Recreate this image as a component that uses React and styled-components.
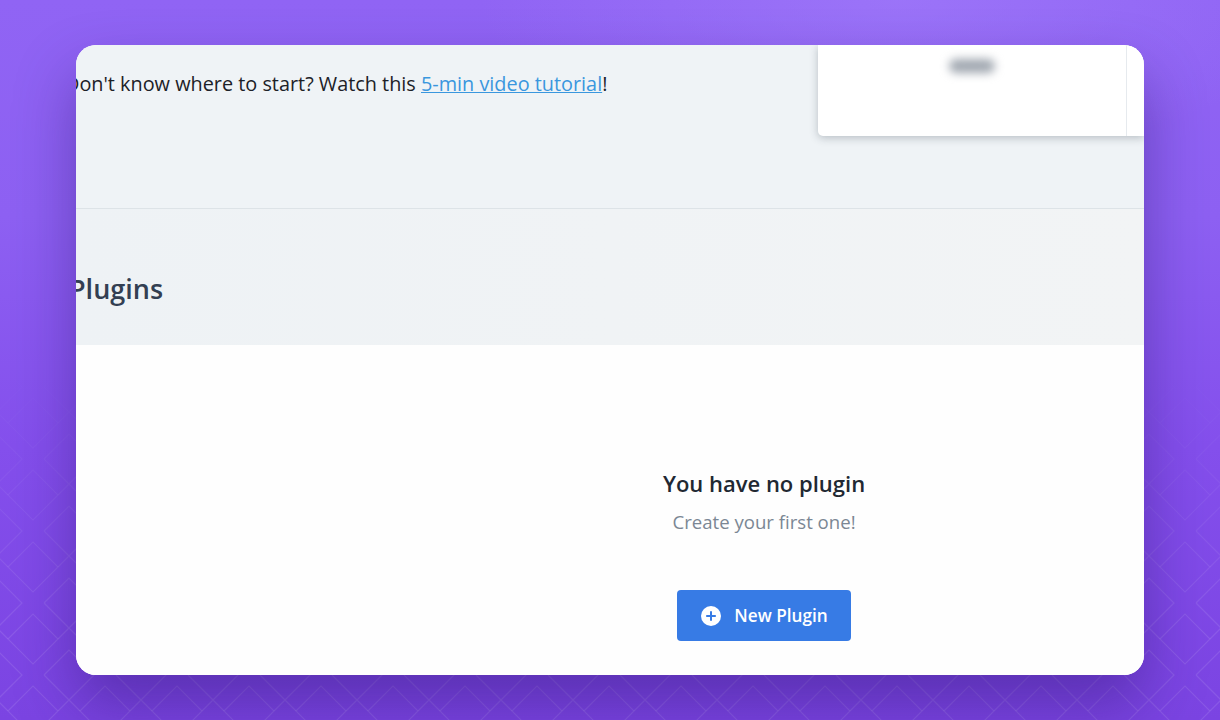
import React from "react";
import styled, { createGlobalStyle } from "styled-components";

const GlobalStyle = createGlobalStyle`
  html, body {
    margin: 0;
    height: 100%;
    overflow: hidden;
    font-family: "Open Sans", "Noto Sans", sans-serif;
  }
`;

const Stage = styled.div`
  position: relative;
  width: 1220px;
  height: 720px;
  box-sizing: border-box;
  padding: 45px 76px;
  overflow: hidden;
  background:
    radial-gradient(ellipse 420px 160px at 900px 0, rgba(164, 128, 252, 0.55), rgba(164, 128, 252, 0)),
    linear-gradient(180deg, #9064f4 0%, #8d60f2 30%, #844fec 62%, #7b44e2 100%);
`;

const Pattern = styled.svg`
  position: absolute;
  inset: 0;
  width: 100%;
  height: 100%;
`;

const Card = styled.div`
  position: relative;
  display: flex;
  flex-direction: column;
  height: 630px;
  border-radius: 20px;
  overflow: hidden;
  background: #fff;
  box-shadow: 0 30px 60px rgba(44, 20, 110, 0.42);
`;

const TopBar = styled.div`
  display: flex;
  justify-content: space-between;
  align-items: flex-start;
  flex: 0 0 164px;
  box-sizing: border-box;
  background: #eff3f6;
  border-bottom: 1px solid #dde3e7;
`;

const Tip = styled.p`
  margin: 25px 0 0 -11px;
  font-size: 19.85px;
  line-height: 28px;
  color: #1c2127;
  white-space: nowrap;
`;

const TipLink = styled.a`
  color: #3a97de;
  text-decoration: underline;
`;

const Popover = styled.div`
  display: flex;
  width: 326px;
  height: 91px;
  background: #fff;
  border-bottom-left-radius: 5px;
  box-shadow: 0 2px 8px rgba(40, 55, 70, 0.28);
`;

const PopoverItem = styled.div`
  flex: 1;
  display: flex;
  justify-content: center;
  padding-top: 14px;
`;

const PopoverRest = styled.div`
  flex: 0 0 17px;
  border-left: 1px solid #e6eaee;
`;

const BlurredLabel = styled.div`
  width: 46px;
  height: 14px;
  border-radius: 7px;
  background: #a0a7b0;
  filter: blur(5px);
`;

const SectionHeader = styled.div`
  flex: 0 0 136px;
  display: flex;
  align-items: center;
  background: linear-gradient(90deg, #eef2f5, #f2f4f5);
`;

const Heading = styled.h2`
  margin: 24px 0 0 -7px;
  font-size: 27px;
  line-height: 36px;
  font-weight: 600;
  color: #333f52;
`;

const Empty = styled.div`
  flex: 1;
  display: flex;
  flex-direction: column;
  align-items: center;
  padding: 123px 0 0 308px;
  background: #fefefe;
`;

const EmptyTitle = styled.h3`
  margin: 0;
  font-size: 22px;
  line-height: 30px;
  font-weight: 600;
  color: #212832;
`;

const EmptyText = styled.p`
  margin: 11px 0 0;
  font-size: 18.6px;
  line-height: 26px;
  color: #7b8794;
`;

const Button = styled.button`
  display: flex;
  align-items: center;
  justify-content: center;
  gap: 13px;
  width: 174px;
  height: 51px;
  margin-top: 55px;
  padding: 0 0 0 1px;
  border: 0;
  border-radius: 4px;
  background: #377be5;
  color: #fff;
  font-family: inherit;
  font-size: 17.2px;
  font-weight: 600;
`;

const PlusIcon = () => (
  <svg width="20" height="20" viewBox="0 0 20 20">
    <circle cx="10" cy="10" r="10" fill="#fff" />
    <path d="M10 5.2v9.6M5.2 10h9.6" stroke="#377be5" strokeWidth="2" />
  </svg>
);

// one tile: a diamond on the tile corners, a second one in the middle whose lower edges run on
const Diamonds = () => (
  <Pattern viewBox="0 0 1220 720" aria-hidden="true">
    <defs>
      <pattern id="diamonds" x="33" y="495" width="72" height="72" patternUnits="userSpaceOnUse">
        <g fill="none" stroke="#fff" strokeOpacity="0.1" strokeWidth="1.2">
          <path d="M-25 0L0 -25L25 0L0 25Z" />
          <path d="M47 0L72 -25L97 0L72 25Z" />
          <path d="M-25 72L0 47L25 72L0 97Z" />
          <path d="M47 72L72 47L97 72L72 97Z" />
          <path d="M11 36L36 11L61 36L25 72M36 61L47 72M11 36L36 61" />
          <path d="M-61 36L-36 11L-11 36L-47 72" />
        </g>
      </pattern>
      <linearGradient id="fade" x1="0" y1="0" x2="0" y2="1">
        <stop offset="0.5" stopColor="#fff" stopOpacity="0" />
        <stop offset="0.88" stopColor="#fff" stopOpacity="1" />
      </linearGradient>
      <mask id="fadeMask">
        <rect width="1220" height="720" fill="url(#fade)" />
      </mask>
    </defs>
    <rect width="1220" height="720" fill="url(#diamonds)" mask="url(#fadeMask)" />
  </Pattern>
);

export default function App() {
  return (
    <>
      <GlobalStyle />
      <Stage>
        <Diamonds />
        <Card>
          <TopBar>
            <Tip>
              Don't know where to start? Watch this <TipLink href="#">5-min video tutorial</TipLink>!
            </Tip>
            <Popover>
              <PopoverItem>
                <BlurredLabel />
              </PopoverItem>
              <PopoverRest />
            </Popover>
          </TopBar>
          <SectionHeader>
            <Heading>Plugins</Heading>
          </SectionHeader>
          <Empty>
            <EmptyTitle>You have no plugin</EmptyTitle>
            <EmptyText>Create your first one!</EmptyText>
            <Button>
              <PlusIcon />
              New Plugin
            </Button>
          </Empty>
        </Card>
      </Stage>
    </>
  );
}
